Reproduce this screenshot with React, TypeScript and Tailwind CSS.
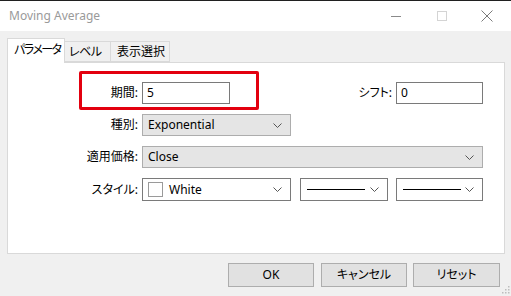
const font = "font-['Noto_Sans','Noto_Sans_CJK_JP',sans-serif] [font-feature-settings:'palt']";

function Chevron() {
  return (
    <svg width="9" height="5" viewBox="0 0 9 5" className="shrink-0">
      <polyline points="0.5,0.5 4.5,4.5 8.5,0.5" fill="none" stroke="#555" strokeWidth="1" />
    </svg>
  );
}

function Select({
  className,
  children,
  gray,
}: {
  className?: string;
  children?: React.ReactNode;
  gray?: boolean;
}) {
  return (
    <div
      className={`flex h-[22px] items-center border pl-[5px] pr-[8px] ${
        gray ? "border-[#adadad] bg-[#e5e5e5]" : "border-[#7a7a7a] bg-white"
      } ${className ?? ""}`}
    >
      <div className="flex min-w-0 flex-1 items-center whitespace-nowrap">{children}</div>
      <Chevron />
    </div>
  );
}

function Label({ children }: { children: React.ReactNode }) {
  return <div className="w-[134px] shrink-0 whitespace-nowrap pr-[4px] text-right">{children}</div>;
}

export default function App() {
  return (
    <div className={`relative h-[296px] w-[511px] overflow-hidden bg-[#f0f0f0] text-[12px] leading-none text-black ${font}`}>
      <div className="h-px bg-[#202020]" />

      {/* title bar */}
      <div className="flex h-[30px] items-center bg-white pl-[9px]">
        <span className="text-[12px] text-[#9a9a9a]">Moving Average</span>
        <div className="ml-auto flex items-center">
          <div className="flex w-[46px] justify-center">
            <div className="h-px w-[10px] bg-[#8a8a8a]" />
          </div>
          <div className="flex w-[46px] justify-center">
            <div className="h-[10px] w-[10px] border border-[#d4d4d4]" />
          </div>
          <div className="flex w-[46px] justify-center pr-[2px]">
            <svg width="12" height="12" viewBox="0 0 12 12">
              <path d="M0.5 0.5 L11.5 11.5 M11.5 0.5 L0.5 11.5" stroke="#7a7a7a" strokeWidth="1" />
            </svg>
          </div>
        </div>
      </div>

      {/* tabs + panel */}
      <div className="pl-[7px] pr-[6px] pt-[7px]">
        <div className="flex h-[24px] items-end whitespace-nowrap">
          <div className="relative z-10 -mb-px flex h-[25px] w-[58px] items-center overflow-hidden border border-b-0 border-[#d9d9d9] bg-white pl-[6px] pb-[2px] tracking-[-1.5px]">
            パラメータ
          </div>
          <div className="flex h-[21px] w-[46px] items-center border-y border-r border-[#d9d9d9] bg-[#f0f0f0] pl-[4px] tracking-[-0.5px]">
            レベル
          </div>
          <div className="flex h-[21px] w-[59px] items-center border-y border-r border-[#d9d9d9] bg-[#f0f0f0] pl-[6px]">
            表示選択
          </div>
        </div>

        <div className="flex h-[192px] flex-col gap-[10px] border border-[#d9d9d9] bg-white pr-[21px] pt-[19px]">
          <div className="flex h-[22px] items-center">
            <Label>期間:</Label>
            <div className="flex h-[22px] w-[88px] items-center border border-[#7a7a7a] bg-white pl-[4px]">5</div>
            <div className="ml-auto whitespace-nowrap pr-[4px]">シフト:</div>
            <div className="flex h-[22px] w-[87px] items-center border border-[#7a7a7a] bg-white pl-[4px]">0</div>
          </div>

          <div className="flex h-[22px] items-center">
            <Label>種別:</Label>
            <Select gray className="w-[149px]">Exponential</Select>
          </div>

          <div className="flex h-[22px] items-center">
            <Label>適用価格:</Label>
            <Select gray className="flex-1">Close</Select>
          </div>

          <div className="flex h-[23px] items-center">
            <Label>スタイル:</Label>
            <Select className="h-[23px] w-[149px]">
              <div className="mr-[6px] h-[15px] w-[15px] border border-[#9a9a9a] bg-white" />
              White
            </Select>
            <Select className="ml-[9px] h-[23px] w-[88px]">
              <div className="ml-[1px] h-px w-[58px] bg-black" />
            </Select>
            <Select className="ml-[8px] h-[23px] w-[87px]">
              <div className="ml-[1px] h-px w-[58px] bg-black" />
            </Select>
          </div>
        </div>
      </div>

      {/* buttons */}
      <div className="mt-[9px] flex justify-end pr-[11px]">
        <button className="h-[24px] w-[86px] border border-[#adadad] bg-[#e1e1e1]">OK</button>
        <button className="ml-[7px] h-[24px] w-[86px] border border-[#adadad] bg-[#e1e1e1]">キャンセル</button>
        <button className="ml-[6px] h-[24px] w-[87px] border border-[#adadad] bg-[#e1e1e1]">リセット</button>
      </div>

      {/* resize grip */}
      <svg width="10" height="10" viewBox="0 0 10 10" className="absolute bottom-[2px] right-[1px]">
        {[
          [8, 2],
          [5, 5],
          [8, 5],
          [2, 8],
          [5, 8],
          [8, 8],
        ].map(([x, y]) => (
          <rect key={`${x}-${y}`} x={x} y={y} width="1.5" height="1.5" fill="#bdbdbd" />
        ))}
      </svg>

      {/* red annotation */}
      <div className="absolute left-[79px] top-[71px] h-[39px] w-[180px] rounded-[2px] border-[3px] border-[#e3000f]" />
    </div>
  );
}
